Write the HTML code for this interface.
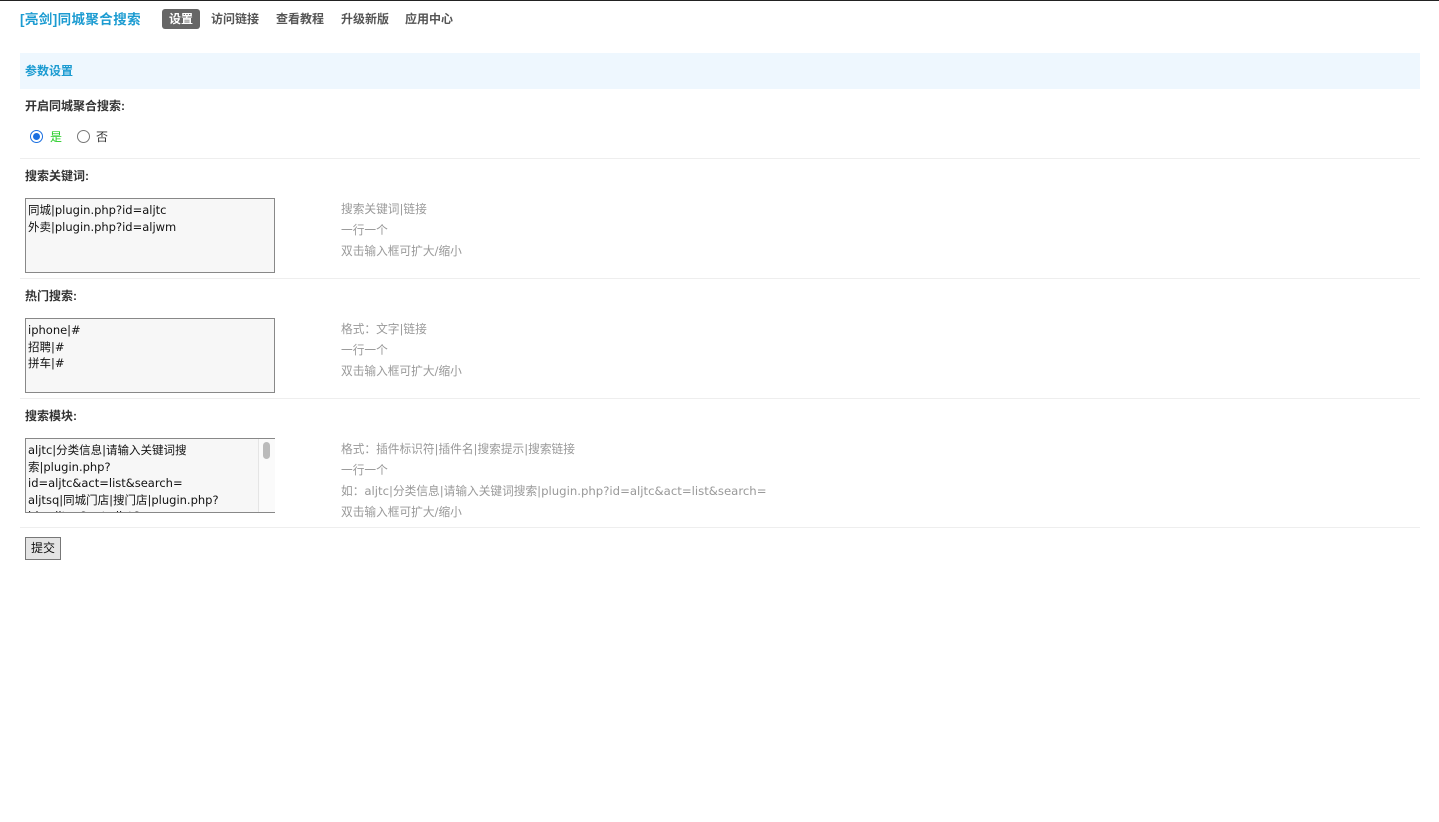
<!DOCTYPE html>
<html><head><meta charset="utf-8"><style>
body{margin:0;width:1439px;height:822px;background:#fff;font-family:"Liberation Sans","Noto Sans CJK SC",sans-serif;font-size:12px;color:#333;position:relative;overflow:hidden;border-top:1px solid #222;box-sizing:border-box}
.a{position:absolute;white-space:nowrap}
.b{font-weight:bold}
.ta{position:absolute;left:25px;width:250px;height:75px;box-sizing:border-box;border:1px solid #888;background:#f7f7f7;padding:3px 2px;font-family:"DejaVu Sans","Noto Sans CJK SC",sans-serif;font-size:11.5px;line-height:16.5px;color:#111;overflow:hidden;white-space:nowrap}
.tip{position:absolute;left:341px;color:#999;font-family:"DejaVu Sans","Noto Sans CJK SC",sans-serif;font-size:11.7px;line-height:21px;white-space:nowrap}
.line{position:absolute;left:20px;width:1400px;height:1px;background:#eeeeee}
.nav{font-size:12px;font-weight:bold;color:#555}
.radio{position:absolute;width:11px;height:11px;border-radius:50%;border:1px solid #777;background:#fff}
</style></head><body>
<div class="a b" style="left:20px;top:10px;font-size:13.5px;letter-spacing:0.4px;color:#1b9bd1;line-height:18px">[亮剑]同城聚合搜索</div>
<div class="a nav" style="left:162px;top:8px;width:38px;height:20px;background:#666;color:#fff;border-radius:3px;text-align:center;line-height:20px">设置</div>
<div class="a nav" style="left:211px;top:10px;line-height:16px">访问链接</div>
<div class="a nav" style="left:276px;top:10px;line-height:16px">查看教程</div>
<div class="a nav" style="left:341px;top:10px;line-height:16px">升级新版</div>
<div class="a nav" style="left:405px;top:10px;line-height:16px">应用中心</div>
<div class="a" style="left:20px;top:52px;width:1400px;height:36px;background:#eef7fe"></div>
<div class="a b" style="left:25px;top:62px;color:#1b9bd1;line-height:16px">参数设置</div>
<div class="a b" style="left:25px;top:97px;line-height:16px">开启同城聚合搜索:</div>
<div class="radio" style="left:30px;top:129px;border-color:#1a6fe0"><div style="position:absolute;left:2px;top:2px;width:7px;height:7px;border-radius:50%;background:#1a6fe0"></div></div>
<div class="a" style="left:50px;top:128px;color:#22cc22;line-height:16px">是</div>
<div class="radio" style="left:77px;top:129px"></div>
<div class="a" style="left:96px;top:128px;line-height:16px">否</div>
<div class="line" style="top:157px"></div>
<div class="a b" style="left:25px;top:167px;line-height:16px">搜索关键词:</div>
<div class="ta" style="top:197px">同城|plugin.php?id=aljtc<br>外卖|plugin.php?id=aljwm</div>
<div class="tip" style="top:198px">搜索关键词|链接<br>一行一个<br>双击输入框可扩大/缩小</div>
<div class="line" style="top:277px"></div>
<div class="a b" style="left:25px;top:287px;line-height:16px">热门搜索:</div>
<div class="ta" style="top:317px">iphone|#<br>招聘|#<br>拼车|#</div>
<div class="tip" style="top:318px">格式：文字|链接<br>一行一个<br>双击输入框可扩大/缩小</div>
<div class="line" style="top:397px"></div>
<div class="a b" style="left:25px;top:407px;line-height:16px">搜索模块:</div>
<div class="ta" style="top:437px">aljtc|分类信息|请输入关键词搜<br>索|plugin.php?<br>id=aljtc&amp;act=list&amp;search=<br>aljtsq|同城门店|搜门店|plugin.php?<br>id=aljtsq&amp;act=list&amp;</div>
<div class="a" style="left:258px;top:438px;width:16px;height:73px;border-left:1px solid #e5e5e5;background:#fafafa"></div>
<div class="a" style="left:263px;top:441px;width:7px;height:17px;border-radius:4px;background:#bbb"></div>
<div class="tip" style="top:438px">格式：插件标识符|插件名|搜索提示|搜索链接<br>一行一个<br>如：aljtc|分类信息|请输入关键词搜索|plugin.php?id=aljtc&amp;act=list&amp;search=<br>双击输入框可扩大/缩小</div>
<div class="line" style="top:526px"></div>
<div class="a" style="left:25px;top:536px;width:36px;height:23px;box-sizing:border-box;border:1px solid #777;background:#e4e4e4;text-align:center;line-height:21px;color:#111">提交</div>
</body></html>
